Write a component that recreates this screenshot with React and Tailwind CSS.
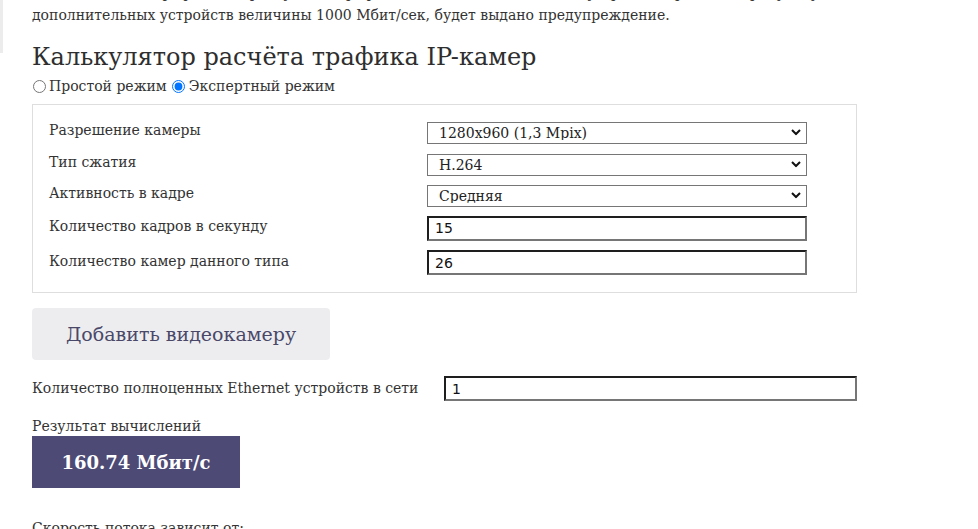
import { useState } from "react";

const serif = { fontFamily: '"DejaVu Serif", "Liberation Serif", serif' };

const Chevron = () => (
    <svg className="pointer-events-none absolute right-[6px] top-1/2 -translate-y-1/2" width="10" height="7" viewBox="0 0 10 7">
        <path d="M1 1.5 L5 5.5 L9 1.5" fill="none" stroke="#111" strokeWidth="2" />
    </svg>
);

const Select = ({ value, options }) => (
    <div className="relative w-[380px] h-[22px]">
        <select
            defaultValue={value}
            className="appearance-none w-full h-full border border-[#767676] bg-white pl-[11px] pr-6 text-[14px] leading-none text-[#222]"
            style={serif}
        >
            {options.map(o => <option key={o}>{o}</option>)}
        </select>
        <Chevron />
    </div>
);

const NumInput = ({ value, className }) => (
    <input
        defaultValue={value}
        className={"h-[25px] border-2 border-t-[#1e1e1e] border-l-[#1e1e1e] border-b-[#767676] border-r-[#767676] bg-white px-[6px] text-[14px] text-[#111] " + className}
        style={{ fontFamily: '"DejaVu Sans", "Liberation Sans", sans-serif' }}
    />
);

const Row = ({ label, children }) => (
    <div className="grid grid-cols-[378px_380px] items-center">
        <div className="text-[14px] text-[#333] -mt-[3px]">{label}</div>
        {children}
    </div>
);

export default function App() {
    const [mode, setMode] = useState("expert");

    return (
        <div className="flex bg-white min-h-[529px] overflow-hidden" style={serif}>
            <div className="w-[3px] h-[53px] bg-[#ececec] shrink-0" />
            <div className="pl-[29px] text-[#333]">
                <p className="-mt-[18px] text-[14px] leading-[22px]">
                    Внимание, если трафик камер в сумме с трафиком полноценных Ethernet устройств превысит пропускную способность
                    <br />
                    дополнительных устройств величины 1000 Мбит/сек, будет выдано предупреждение.
                </p>

                <h1 className="mt-[16px] text-[24px] leading-[30px] text-[#2e2e2e]">Калькулятор расчёта трафика IP-камер</h1>

                <div className="mt-[4px] flex items-center text-[14px] leading-[20px]">
                    <input type="radio" name="mode" checked={mode === "simple"} onChange={() => setMode("simple")} className="m-0 ml-[1px] mr-[3px] w-[13px] h-[13px]" />
                    <span>Простой режим</span>
                    <input type="radio" name="mode" checked={mode === "expert"} onChange={() => setMode("expert")} className="m-0 ml-[5px] mr-[4px] w-[13px] h-[13px]" />
                    <span>Экспертный режим</span>
                </div>

                <div className="mt-[8px] w-[825px] border border-[#dedede] pl-[16px] pt-[16px] pb-[17px] flex flex-col gap-[9.5px]">
                    <Row label="Разрешение камеры">
                        <Select value="1280x960 (1,3 Mpix)" options={["640x480 (0,3 Mpix)", "1280x720 (1 Mpix)", "1280x960 (1,3 Mpix)", "1920x1080 (2 Mpix)"]} />
                    </Row>
                    <Row label="Тип сжатия">
                        <Select value="H.264" options={["MJPEG", "MPEG-4", "H.264", "H.265"]} />
                    </Row>
                    <Row label="Активность в кадре">
                        <Select value="Средняя" options={["Низкая", "Средняя", "Высокая"]} />
                    </Row>
                    <Row label="Количество кадров в секунду">
                        <NumInput value="15" className="w-[380px]" />
                    </Row>
                    <Row label="Количество камер данного типа">
                        <NumInput value="26" className="w-[380px] h-[24px]" />
                    </Row>
                </div>

                <button className="mt-[15px] w-[298px] h-[52px] rounded-[4px] bg-[#ededf0] text-[19px] text-[#4a4868]">
                    Добавить видеокамеру
                </button>

                <div className="mt-[16px] flex items-center">
                    <div className="w-[412px] text-[14px] -mt-[1px]">Количество полноценных Ethernet устройств в сети</div>
                    <NumInput value="1" className="w-[413px] h-[24px]" />
                </div>

                <div className="mt-[15px] text-[14px] leading-[20px]">Результат вычислений</div>
                <div className="w-[208px] h-[52px] bg-[#4d4a76] flex items-center justify-center text-white text-[18px] font-semibold">
                    160.74 Мбит/с
                </div>

                <p className="mt-[30px] text-[14px] leading-[20px]">Скорость потока зависит от:</p>
            </div>
        </div>
    );
}
